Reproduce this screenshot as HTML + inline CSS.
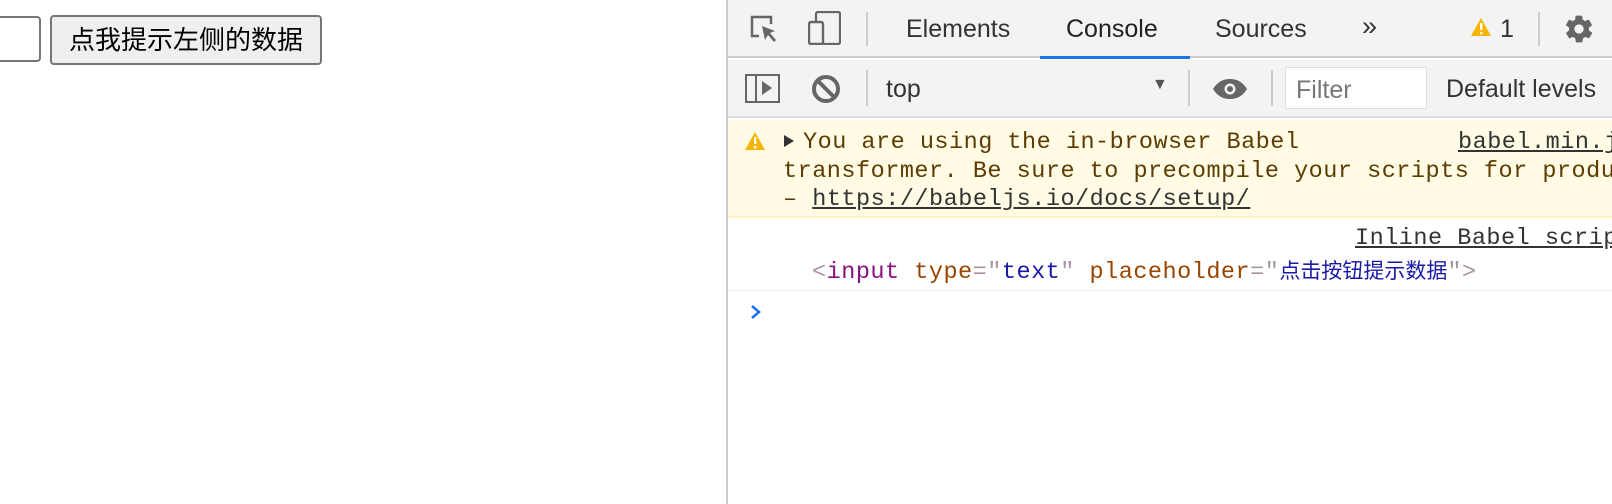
<!DOCTYPE html>
<html><head><meta charset="utf-8"><style>
*{margin:0;padding:0;box-sizing:border-box}
body{width:1612px;height:504px;background:#fff;position:relative;overflow:hidden;font-family:"Liberation Sans","Noto Sans CJK SC",sans-serif}
.a{position:absolute;white-space:nowrap}
.mono{font-family:"Liberation Mono","Noto Sans CJK SC",monospace;font-size:23.5px;letter-spacing:0.5px;line-height:29px}
.tab{font-size:25px;color:#333;top:15px}
.sep{position:absolute;width:2px;background:#ccc}
</style></head><body>
<div class="a" style="left:-6px;top:16px;width:47px;height:46px;border:2px solid #767676;border-radius:4px"></div>
<div class="a" style="left:50px;top:15px;width:272px;height:50px;border:2px solid #767676;border-radius:4px;background:#efefef;font-size:26px;line-height:46px;text-align:center;color:#000">点我提示左侧的数据</div>

<div class="a" style="left:726px;top:0;width:2px;height:504px;background:#ccc"></div>
<div class="a" style="left:728px;top:0;width:884px;height:58px;background:#f3f3f3;border-bottom:2px solid #ccc"></div>
<div class="a" style="left:728px;top:60px;width:884px;height:58px;background:#f3f3f3;border-bottom:2px solid #ddd"></div>

<svg class="a" style="left:750px;top:15px" width="28" height="28" viewBox="0 0 28 28"><path d="M9 21H2V2h19v7" fill="none" stroke="#666" stroke-width="2.5"/><path d="M12 11l13 5-5 2 6 7-2 2-6-7-3 5z" fill="#666"/></svg>
<svg class="a" style="left:808px;top:11px" width="33" height="34" viewBox="0 0 33 34"><rect x="8" y="1" width="24" height="32" fill="none" stroke="#666" stroke-width="2.2" rx="2"/><rect x="1" y="11" width="14" height="22" fill="#f3f3f3" stroke="#666" stroke-width="2.4" rx="2"/></svg>
<div class="sep" style="left:866px;top:12px;height:34px"></div>
<div class="a tab" style="left:906px">Elements</div>
<div class="a tab" style="left:1066px;color:#222">Console</div>
<div class="a" style="left:1040px;top:56px;width:150px;height:3px;background:#1a73e8"></div>
<div class="a tab" style="left:1215px">Sources</div>
<div class="a tab" style="left:1362px;font-size:27px;top:11px">»</div>
<svg class="a" style="left:1470px;top:17px" width="22" height="20" viewBox="0 0 22 20"><path d="M11 1L21 19H1z" fill="#f4b400"/><rect x="10" y="6" width="2.4" height="7" fill="#fff"/><rect x="10" y="15" width="2.4" height="2.4" fill="#fff"/></svg>
<div class="a tab" style="left:1500px">1</div>
<div class="sep" style="left:1538px;top:12px;height:34px"></div>
<svg class="a" style="left:1563px;top:13px" width="32" height="32" viewBox="0 0 24 24"><path fill="#666" d="M19.4 13c.04-.3.06-.66.06-1s-.02-.7-.06-1l2.1-1.6c.2-.15.24-.42.12-.64l-2-3.460c-.12-.22-.39-.3-.6-.22l-2.5 1c-.5-.4-1.100-.72-1.700-.98L14.400 2.400C14.370 2.170 14.170 2 13.900 2h-4c-.25 0-.46.17-.5.4L9.1 5.1c-.6.26-1.2.6-1.7.98l-2.5-1c-.23-.08-.5 0-.6.22l-2 3.460c-.13.22-.07.49.12.64L4.6 11c-.04.3-.06.66-.06 1s.02.7.06 1l-2.1 1.6c-.2.15-.24.42-.12.64l2 3.460c.12.22.39.3.6.22l2.5-1c.5.4 1.1.72 1.7.98l.4 2.7c.04.23.25.4.5.4h4c.25 0 .46-.17.5-.4l.4-2.7c.6-.26 1.2-.6 1.7-.98l2.5 1c.23.08.5 0 .6-.22l2-3.460c.12-.22.07-.49-.12-.64zM12 15.5a3.5 3.5 0 110-7 3.5 3.5 0 010 7z"/></svg>

<svg class="a" style="left:745px;top:74px" width="35" height="29" viewBox="0 0 35 29"><rect x="1" y="1" width="33" height="27" fill="none" stroke="#666" stroke-width="2"/><path d="M11 1v27" stroke="#666" stroke-width="2"/><path d="M17 7l10 7-10 7z" fill="#666"/></svg>
<svg class="a" style="left:811px;top:74px" width="30" height="30" viewBox="0 0 30 30"><circle cx="15" cy="15" r="12" fill="none" stroke="#666" stroke-width="4"/><path d="M7 7l16 16" stroke="#666" stroke-width="4"/></svg>
<div class="sep" style="left:866px;top:70px;height:36px"></div>
<div class="a" style="left:886px;top:75px;font-size:25px;color:#333">top</div>
<div class="a" style="left:1152px;top:76px;font-size:16px;color:#555">▼</div>
<div class="sep" style="left:1188px;top:70px;height:36px"></div>
<svg class="a" style="left:1212px;top:79px" width="36" height="20" viewBox="0 0 36 20"><path d="M1 10C6 2 12 0 18 0s12 2 17 10c-5 8-11 10-17 10S6 18 1 10z" fill="#666"/><circle cx="18" cy="10" r="5.5" fill="#f3f3f3"/><circle cx="18" cy="10" r="3" fill="#666"/></svg>
<div class="sep" style="left:1271px;top:70px;height:36px"></div>
<div class="a" style="left:1285px;top:67px;width:142px;height:42px;background:#fff;border:1px solid #ddd"></div>
<div class="a" style="left:1296px;top:76px;font-size:25px;color:#777">Filter</div>
<div class="a" style="left:1446px;top:75px;font-size:25px;color:#333">Default levels</div>

<div class="a" style="left:728px;top:120px;width:884px;height:98px;background:#fffbe5;border-bottom:2px solid #fff5c2"></div>
<svg class="a" style="left:744px;top:131px" width="22" height="20" viewBox="0 0 22 20"><path d="M11 1L21 19H1z" fill="#f4b400"/><rect x="10" y="6" width="2.4" height="7" fill="#fff"/><rect x="10" y="15" width="2.4" height="2.4" fill="#fff"/></svg>
<div class="a" style="left:784px;top:135px;width:0;height:0;border-left:10px solid #333;border-top:6px solid transparent;border-bottom:6px solid transparent"></div>
<div class="a mono" style="left:803px;top:128px;color:#5c3c00">You are using the in-browser Babel</div>
<div class="a mono" style="left:1458px;top:128px;color:#333;text-decoration:underline">babel.min.js</div>
<div class="a mono" style="left:783px;top:157px;color:#5c3c00">transformer. Be sure to precompile your scripts for production</div>
<div class="a mono" style="left:783px;top:185px;color:#5c3c00">– <span style="text-decoration:underline;color:#333">https://babeljs.io/docs/setup/</span></div>

<div class="a mono" style="left:1355px;top:224px;color:#333;text-decoration:underline">Inline Babel script</div>
<div class="a mono" style="left:812px;top:258px"><span style="color:#a894a6">&lt;</span><span style="color:#881280">input</span> <span style="color:#994500">type</span><span style="color:#a894a6">="</span><span style="color:#1a1aa6">text</span><span style="color:#a894a6">"</span> <span style="color:#994500">placeholder</span><span style="color:#a894a6">="</span><span style="color:#1a1aa6;letter-spacing:0;font-size:21px">点击按钮提示数据</span><span style="color:#a894a6">"&gt;</span></div>
<div class="a" style="left:728px;top:290px;width:884px;height:1px;background:#eee"></div>
<svg class="a" style="left:750px;top:304px" width="12" height="16" viewBox="0 0 12 16"><path d="M2 2l7 6-7 6" fill="none" stroke="#1a73e8" stroke-width="2.5"/></svg>
</body></html>
